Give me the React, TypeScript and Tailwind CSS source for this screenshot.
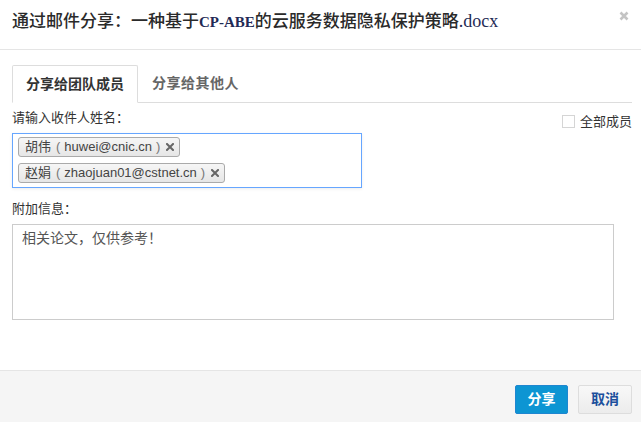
import React from "react";

const cjk = '"Liberation Sans", "Noto Sans CJK SC", sans-serif';
const serif = '"Liberation Serif", "Noto Sans CJK SC", serif';

function Chip({ name, email }: { name: string; email: string }) {
  return (
    <div className="flex h-[20px] items-center rounded-[3px] border border-[#aaaaaa] bg-gradient-to-b from-[#f6f6f6] to-[#e6e6e6] pl-[6px] pr-[5px] text-[13px] leading-[18px] text-[#444]">
      <span>{name}</span>
      <span className="ml-[5px] text-[#777]">(</span>
      <span className="ml-[4px] text-[#444]">{email}</span>
      <span className="ml-[4px] text-[#777]">)</span>
      <svg className="ml-[6px]" width="8" height="8" viewBox="0 0 8 8">
        <path d="M1 1L7 7M7 1L1 7" stroke="#666" strokeWidth="2" strokeLinecap="square" />
      </svg>
    </div>
  );
}

export default function App() {
  return (
    <div
      className="flex h-[422px] w-[641px] flex-col bg-white text-[#333]"
      style={{ fontFamily: cjk }}
    >
      {/* Header */}
      <div className="flex h-[50px] shrink-0 items-center justify-between border-b border-[#e5e5e5] pl-[12px] pr-[12px]">
        <div className="mt-[-8px] flex items-baseline text-[17px] font-medium text-[#2a2a2a]" style={{ fontFamily: '"Noto Sans CJK SC", sans-serif' }}>
          <span>通过邮件分享：一种基于</span>
          <span className="text-[15px] font-bold text-[#1f2b55]" style={{ fontFamily: serif }}>CP-ABE</span>
          <span>的云服务数据隐私保护策略</span>
          <span className="text-[18px] font-normal text-[#1f2b55]" style={{ fontFamily: serif }}>.docx</span>
        </div>
        <svg className="mt-[-18px]" width="10" height="10" viewBox="0 0 10 10">
          <path d="M1.5 1.5L8.5 8.5M8.5 1.5L1.5 8.5" stroke="#c4c4c4" strokeWidth="2.6" />
        </svg>
      </div>

      {/* Body */}
      <div className="flex flex-1 flex-col pt-[15px]">
        {/* Tabs */}
        <div className="mx-[12px] mr-[9px] flex border-b border-[#dddddd]">
          <div className="-mb-px flex h-[38px] items-center rounded-t-[2px] border border-[#dddddd] border-b-white bg-white px-[13px] text-[14px] font-bold text-[#333]">
            分享给团队成员
          </div>
          <div className="flex h-[37px] items-center px-[14px] text-[14px] font-bold tracking-[0.5px] text-[#666]">
            分享给其他人
          </div>
        </div>

        {/* Recipient label row */}
        <div className="mt-[7px] flex h-[23px] items-start justify-between pl-[12px] pr-[9px]">
          <span className="text-[13px] leading-[16px] text-[#333]">请输入收件人姓名：</span>
          <label className="mt-[5px] flex h-[13px] items-center gap-[5px] text-[13px] text-[#333]">
            <span className="block h-[13px] w-[13px] border border-[#d5d5d5] bg-white" />
            <span className="leading-[13px]">全部成员</span>
          </label>
        </div>

        {/* Recipient box */}
        <div className="ml-[12px] flex h-[55px] w-[350px] flex-col items-start gap-[6px] border border-[#66a6ff] px-[5px] pt-[3px] text-[#66a6ff] shadow-[0_1px_3px_rgba(0,0,0,0.08)]">
          <Chip name="胡伟" email="huwei@cnic.cn" />
          <Chip name="赵娟" email="zhaojuan01@cstnet.cn" />
        </div>

        {/* Additional info */}
        <div className="ml-[12px] mt-[13px] text-[13px] leading-[16px] text-[#333]">附加信息：</div>
        <div className="ml-[12px] mt-[7px] h-[96px] w-[602px] border border-[#cccccc] px-[9px] pt-[3px] text-[14px] leading-[20px] text-[#555]">
          相关论文，仅供参考！
        </div>
      </div>

      {/* Footer */}
      <div className="flex h-[52px] shrink-0 items-start justify-end gap-[10px] border-t border-[#e5e5e5] bg-[#f5f5f5] pr-[9px] pt-[14px]">
        <button className="flex h-[29px] w-[53px] items-center justify-center rounded-[2px] border border-[#1f86d0] bg-[#0d95d3] text-[14px] font-bold text-white">
          分享
        </button>
        <button className="flex h-[29px] w-[54px] items-center justify-center rounded-[2px] border border-[#dddddd] bg-gradient-to-b from-[#f8f8f8] to-[#ececec] text-[14px] font-bold text-[#1c4f9c]">
          取消
        </button>
      </div>
    </div>
  );
}
